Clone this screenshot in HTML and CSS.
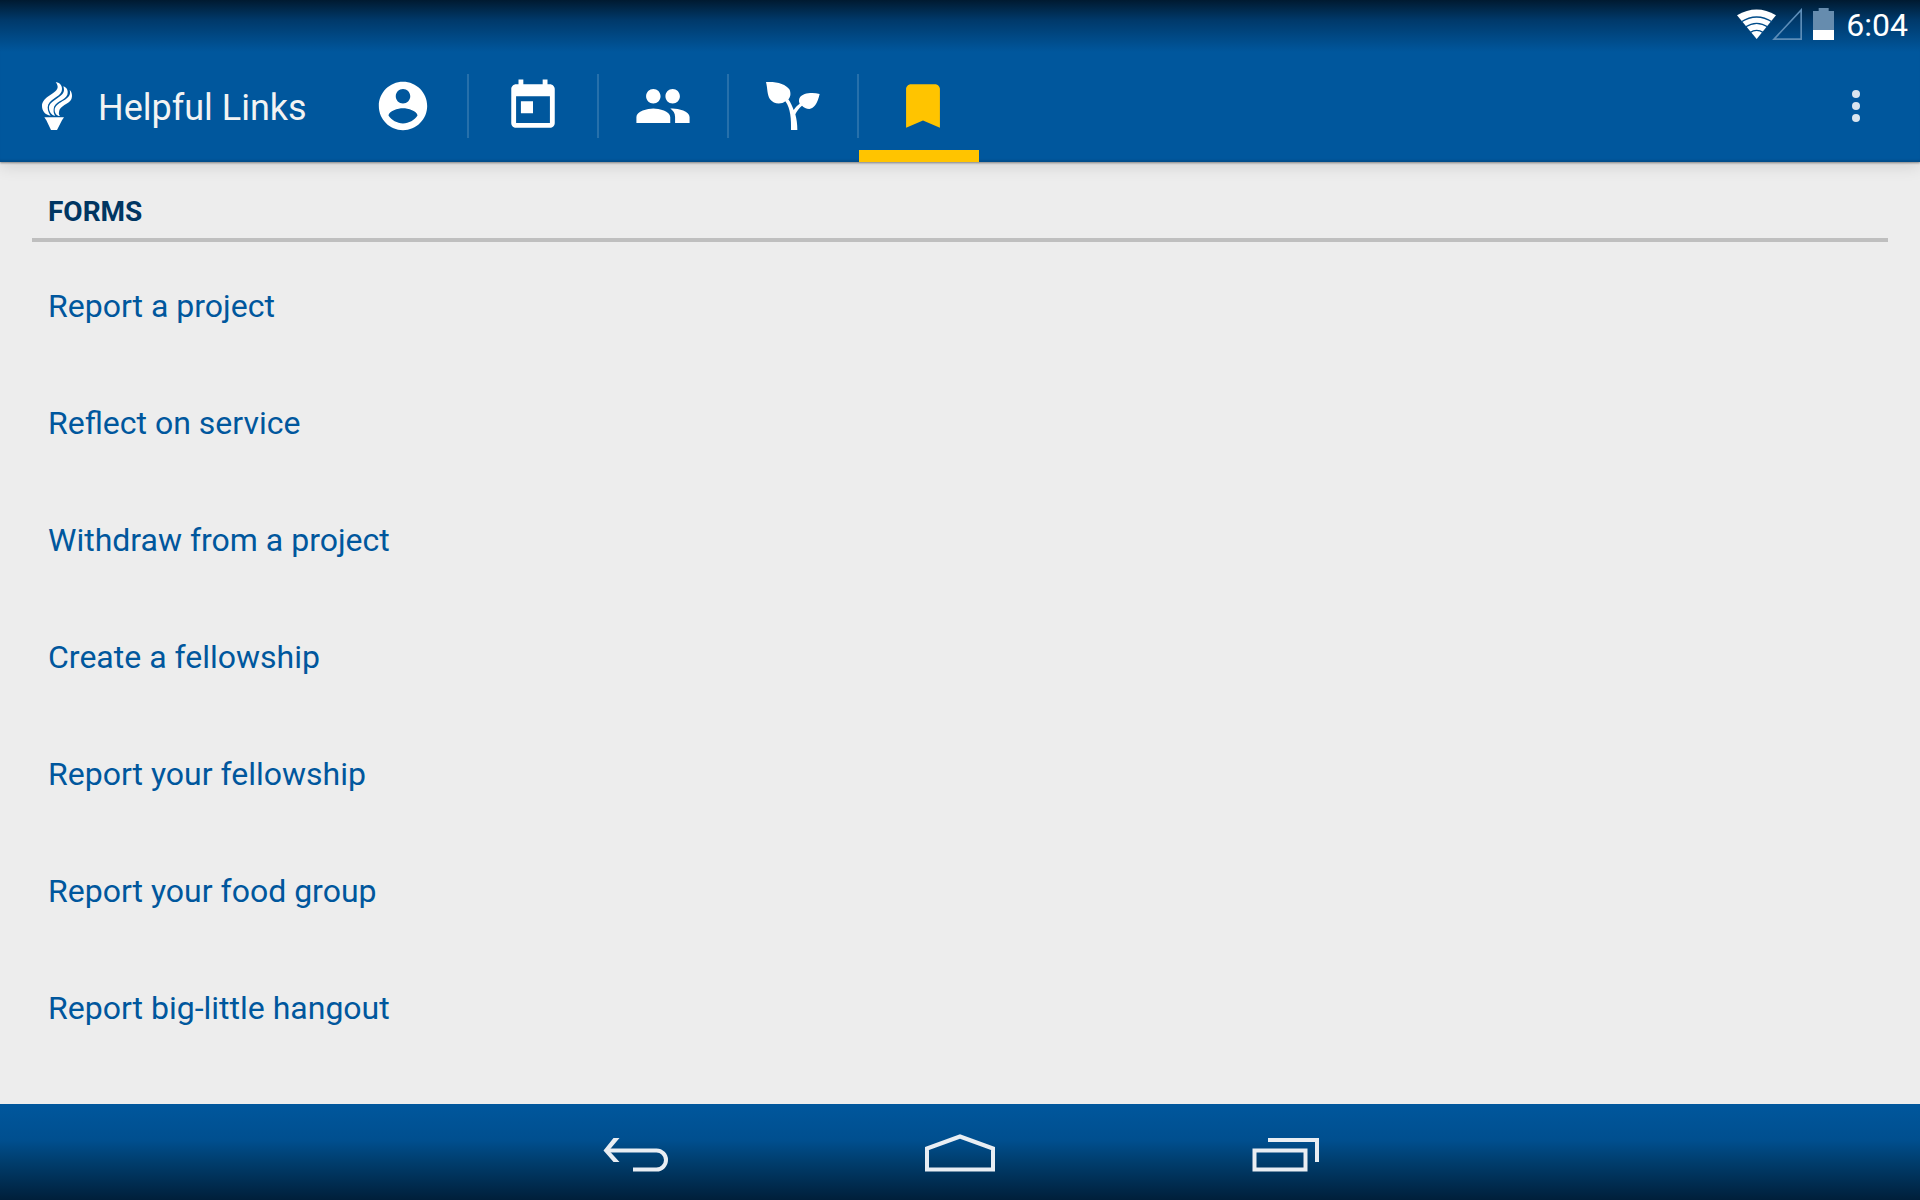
FILE: index.html
```html
<!DOCTYPE html>
<html lang="en">
<head>
<meta charset="utf-8">
<meta name="viewport" content="width=device-width, initial-scale=1">
<title>Helpful Links</title>
<link rel="stylesheet" href="styles.css">
</head>
<body>
<header class="top">
  <div class="status">
    <svg class="network" viewBox="51 24 201 96" aria-hidden="true">
      <path d="M113 117 54 46Q113 11 171 46Z" fill="#fff"/>
      <g fill="none" stroke="#004c8a" stroke-width="4">
        <path d="M66 66Q113 36 160 66M79 81Q113 59 147 81M93 98Q113 84 133 98"/>
      </g>
      <path d="M165 117.500H246.500V30Z" fill="none" stroke="#5c8db8" stroke-width="5"/>
    </svg>
    <svg class="battery" viewBox="279 24 63 96" aria-hidden="true">
      <path d="M279 33h17v-9h30v9h16v57h-63z" fill="#668cae"/>
      <path d="M279 90h63v30h-63z" fill="#fff"/>
    </svg>
    <time class="clock">6:04</time>
  </div>
  <div class="bar">
    <svg class="logo" viewBox="60 60 102 156" aria-hidden="true">
      <path d="M107 66C122 68 129 80 125 94C120 112 84 118 83 142C83 154 88 162 92 167C76 165 66 153 66 138C66 108 114 100 113 80C112 74 110 70 107 66Z"/>
      <path d="M130 79C140 82 146 92 142 104C135 122 102 124 101 147C100 157 102 163 106 167C94 166 87 154 87 143C88 120 132 112 132 90C132 86 131 82 130 79Z"/>
      <path d="M149 90C156 96 158 108 154 118C147 134 118 136 117 156C116 161 117 165 120 168C110 168 104 160 104 150C106 126 148 122 150 100C150 96 150 93 149 90Z"/>
      <path d="M73 172H132L126 181L111 210H93L79 181Z"/>
    </svg>
    <h1 class="title">Helpful Links</h1>
    <nav class="tabs" aria-label="Sections">
      <a class="tab" href="#profile" aria-label="Profile">
        <svg viewBox="0 0 24 24"><path d="M12 2C6.480 2 2 6.480 2 12s4.480 10 10 10 10-4.480 10-10S17.520 2 12 2zm0 3c1.660 0 3 1.340 3 3s-1.340 3-3 3-3-1.340-3-3 1.340-3 3-3zm0 14.200c-2.500 0-4.710-1.280-6-3.220.030-1.990 4-3.080 6-3.080 1.990 0 5.970 1.090 6 3.080-1.290 1.940-3.500 3.220-6 3.220z"/></svg>
      </a>
      <a class="tab" href="#events" aria-label="Events">
        <svg viewBox="0 0 24 24"><path d="M19 3h-1V1h-2v2H8V1H6v2H5c-1.110 0-1.990.9-1.990 2L3 19c0 1.100.890 2 2 2h14c1.100 0 2-.9 2-2V5c0-1.100-.9-2-2-2zm0 16H5V8h14v11zM7 10h5v5H7z"/></svg>
      </a>
      <a class="tab" href="#people" aria-label="People">
        <svg viewBox="0 0 24 24"><path d="M16 11c1.660 0 2.990-1.340 2.990-3S17.660 5 16 5c-1.660 0-3 1.340-3 3s1.340 3 3 3zm-8 0c1.660 0 2.990-1.340 2.990-3S9.660 5 8 5C6.340 5 5 6.340 5 8s1.340 3 3 3zm0 2c-2.330 0-7 1.170-7 3.500V19h14v-2.500c0-2.330-4.670-3.500-7-3.500zm8 0c-.290 0-.620.020-.970.050 1.160.840 1.970 1.970 1.970 3.450V19h6v-2.500c0-2.330-4.670-3.500-7-3.500z"/></svg>
      </a>
      <a class="tab" href="#service" aria-label="Service">
        <svg viewBox="492 51 174 174"><path d="M498 66C530 64 558 72 569 89C574 103 570 113 565 118C572 128 577 139 581 150C585 143 591 137 599 131C596 125 596 118 600 112C608 100 635 96 659 102C652 132 642 145 628 147C619 147 611 142 606 137C598 144 590 153 586 163C590 178 592 192 592 210H573C574 180 572 145 556 124C544 134 521 133 510 118C501 104 503 86 498 66Z"/></svg>
      </a>
      <a class="tab active" href="#links" aria-label="Helpful Links" aria-current="page">
        <svg viewBox="0 0 24 24"><path d="M17 3H7c-1.100 0-2 .9-2 2v16l7-3 7 3V5c0-1.100-.9-2-2-2z"/></svg>
      </a>
    </nav>
    <button class="more" type="button" aria-label="More options">
      <svg viewBox="0 0 12 36"><circle cx="6" cy="6" r="4"/><circle cx="6" cy="18" r="4"/><circle cx="6" cy="30" r="4"/></svg>
    </button>
  </div>
</header>
<main class="content">
  <h2 class="section">FORMS</h2>
  <ul class="links">
    <li><a href="#report-project">Report a project</a></li>
    <li><a href="#reflect">Reflect on service</a></li>
    <li><a href="#withdraw">Withdraw from a project</a></li>
    <li><a href="#create-fellowship">Create a fellowship</a></li>
    <li><a href="#report-fellowship">Report your fellowship</a></li>
    <li><a href="#food-group">Report your food group</a></li>
    <li><a href="#hangout">Report big-little hangout</a></li>
  </ul>
</main>
<footer class="system">
  <button type="button" aria-label="Back">
    <svg viewBox="0 0 80 48"><path d="M11 22.500H60.500a9.500 9.500 0 0 1 0 19H37"/><path class="solid" d="M17.500 10h6L13 22.500 23.500 34h-6l-10-11.500z"/></svg>
  </button>
  <button type="button" aria-label="Home">
    <svg viewBox="0 0 80 48"><path d="M7 41.500V20.500L40 8.500 73 20.500V41.500Z"/></svg>
  </button>
  <button type="button" aria-label="Recent apps">
    <svg viewBox="0 0 80 48"><path d="M10.500 22.500H61.500V41.500H10.500ZM24 12H73V34"/></svg>
  </button>
</footer>
</body>
</html>
```
FILE: styles.css
```css
* { box-sizing: border-box; }

body {
  margin: 0;
  min-height: 100vh;
  display: flex;
  flex-direction: column;
  background: #ededed;
  color: #00579d;
  font-family: Roboto, sans-serif;
}

svg { display: block; fill: #fff; }

button {
  display: flex;
  align-items: center;
  justify-content: center;
  padding: 0;
  border: 0;
  background: none;
  cursor: pointer;
}

/* Status and action bars */
.top {
  background: linear-gradient(#001a30 0, #00396a 20px, #00579d 52px);
  box-shadow: 0 1px 2px rgba(0, 0, 0, .4), 0 4px 16px rgba(0, 0, 0, .12);
}

.status {
  height: 50px;
  padding: 0 12px 2px;
  display: flex;
  align-items: center;
  justify-content: flex-end;
  gap: 10px;
}

.network { width: 67px; height: 32px; }
.battery { width: 21px; height: 32px; }

.clock {
  padding: 2px 0 0 2px;
  color: #fff;
  font-size: 32px;
  line-height: 48px;
}

.bar {
  height: 112px;
  padding: 0 32px 0 40px;
  display: flex;
  align-items: center;
  box-shadow: inset 0 -3px 2px -1px rgba(0, 0, 0, .12);
}

.logo { width: 34px; height: 52px; }

.title {
  width: 241px;
  margin: 0 0 0 24px;
  padding-top: 4px;
  color: #f3f3f3;
  font-size: 36px;
  font-weight: 400;
  line-height: 48px;
  white-space: nowrap;
}

.tabs {
  flex: 1;
  align-self: stretch;
  display: flex;
  gap: 2px;
}

.tab {
  position: relative;
  width: 128px;
  display: flex;
  align-items: center;
  justify-content: center;
}

.tab svg { width: 58px; height: 58px; }

.tab + .tab::before {
  content: "";
  position: absolute;
  left: -2px;
  top: 24px;
  width: 2px;
  height: 64px;
  background: rgba(255, 255, 255, .15);
}

.active svg { fill: #ffc400; }

.active::after {
  content: "";
  position: absolute;
  left: 0;
  bottom: 0;
  width: 120px;
  height: 12px;
  background: #ffc400;
}

.more { width: 64px; height: 64px; }
.more svg { width: 12px; height: 36px; fill: #d9e5ef; }

/* Link list */
.content {
  flex: 1;
  padding: 16px 32px;
}

.section {
  margin: 0;
  padding: 16px 16px 8px;
  border-bottom: 4px solid #bfbfbf;
  color: #003662;
  font-size: 28px;
  font-weight: 700;
  line-height: 36px;
}

.links {
  margin: 0;
  padding: 6px 0 0;
  list-style: none;
}

.links a {
  display: block;
  padding: 0 16px;
  color: #00579d;
  font-size: 32px;
  line-height: 117px;
  text-decoration: none;
}

/* System navigation */
.system {
  height: 96px;
  display: flex;
  justify-content: center;
  background: linear-gradient(#00579d 0, #004f8f 36px, #003f70 56px, #001f3a 100%);
}

.system button { width: 324px; }

.system svg {
  width: 80px;
  height: 48px;
  fill: none;
  stroke: #e9eef3;
  stroke-width: 4;
}

.system .solid { fill: #e9eef3; stroke: none; }
```
